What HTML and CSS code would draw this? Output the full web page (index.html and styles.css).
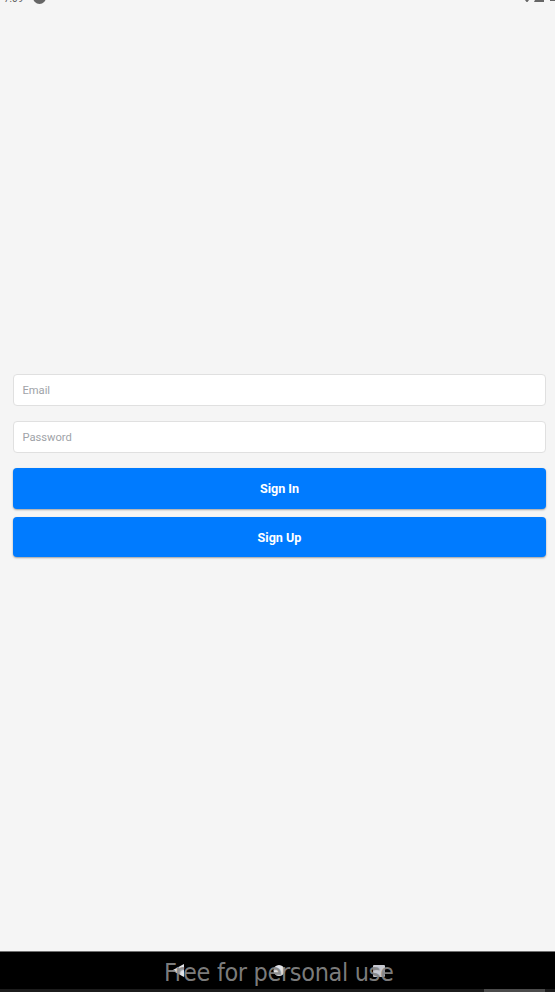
FILE: index.html
```html
<!DOCTYPE html>
<html lang="en">
<head>
<meta charset="utf-8">
<meta name="viewport" content="width=device-width">
<title>Sign In</title>
<link rel="stylesheet" href="styles.css">
</head>
<body>
<div class="screen">
  <header class="status">
    <span class="clock">7:09</span>
    <span class="dot"></span>
    <svg class="signals" width="31" height="2" viewBox="0 0 31 2"><path d="M1 0h4L3.500 2h-1zM11 0h9v2h-10zM26 0h5v1h-5z" fill="#666"/></svg>
  </header>
  <main class="form">
    <input class="field" type="text" placeholder="Email" aria-label="Email">
    <input class="field" type="password" placeholder="Password" aria-label="Password">
    <button class="button">Sign In</button>
    <button class="button">Sign Up</button>
  </main>
  <footer class="nav">
    <div class="keys">
      <svg width="13" height="14" viewBox="0 0 13 14"><path d="M0 6.500L12 0V13z" fill="#e2e3e8"/></svg>
      <svg width="12" height="12" viewBox="0 0 12 12"><circle cx="6" cy="5.500" r="5.500" fill="#e2e3e8"/></svg>
      <svg width="12" height="12" viewBox="0 0 12 12"><rect width="12" height="12" rx="1" fill="#c7c9d1"/></svg>
    </div>
    <div class="watermark">Free for personal use</div>
    <div class="track"><div class="thumb"></div></div>
  </footer>
</div>
</body>
</html>
```
FILE: styles.css
```css
* { box-sizing: border-box; }
body { margin: 0; font-family: Roboto, "Liberation Sans", sans-serif; background: #f5f5f5; }
.screen { display: flex; flex-direction: column; height: 992px; overflow: hidden; }
.status { display: flex; align-items: flex-end; height: 4px; padding-left: 4px; flex: none; overflow: hidden; }
.clock { width: 29px; font-size: 10px; line-height: 12px; margin-bottom: -1px; color: #606060; }
.dot { width: 13px; height: 13px; border-radius: 50%; background: #666; }
.signals { margin-left: auto; align-self: flex-start; }
.form { flex: 1; display: flex; flex-direction: column; padding: 370px 9.400px 0 13.400px; }
.field {
  height: 32px; margin: 0 0 15px; padding: 0 8px; border: 1px solid #e0e0e0; border-radius: 4px;
  background: #fff; font: 11.200px Roboto, sans-serif; color: #333; outline: 0;
}
.field::placeholder { color: #a0a3a8; opacity: 1; }
.button {
  height: 40.500px; margin: 0 0 8px; padding: 1.500px 0 0; border: 0; border-radius: 4px; background: #007bff;
  box-shadow: 0 1px 2px rgba(0, 0, 0, .35); font: bold 12.600px/16px Roboto, sans-serif; color: #fff;
}
.nav { position: relative; flex: none; display: flex; flex-direction: column; height: 41px; background: #000; border-top: 1px solid #707070; }
.keys { flex: 1; display: flex; align-items: center; justify-content: space-between; width: 213px; margin-left: 172px; }
.watermark {
  position: absolute; left: 164px; top: 6px; font: 25px/30px "DejaVu Sans Condensed", "DejaVu Sans", sans-serif;
  letter-spacing: -.35px; color: rgba(136, 136, 136, .92); white-space: nowrap; text-shadow: 1px 1px 1px rgba(0, 0, 0, .35);
}
.track { display: flex; justify-content: flex-end; height: 3px; padding-right: 10px; background: #1c1c1c; }
.thumb { width: 61px; background: #4b4b4b; }
```
